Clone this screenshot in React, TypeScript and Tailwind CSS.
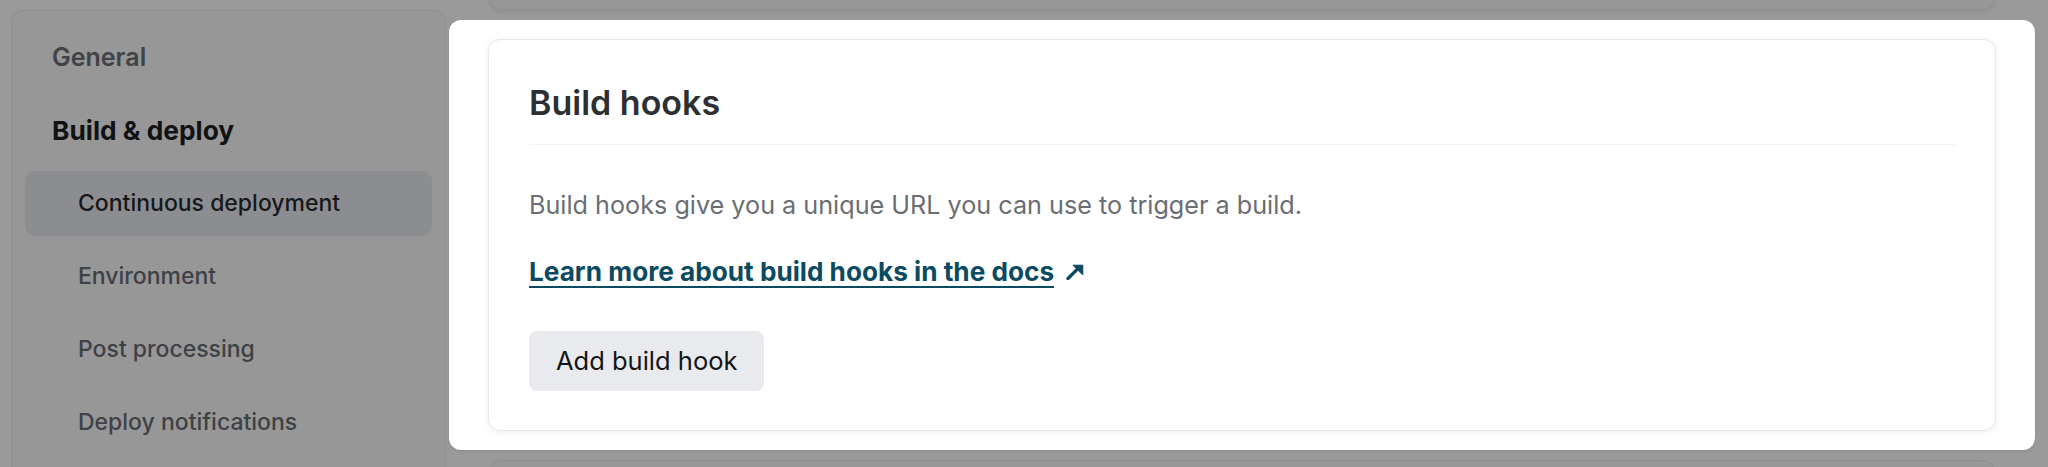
import React from "react";

const navItems = [
  { label: "General", level: 0, active: false },
  { label: "Build & deploy", level: 0, active: false, bold: true },
  { label: "Continuous deployment", level: 1, active: true },
  { label: "Environment", level: 1, active: false },
  { label: "Post processing", level: 1, active: false },
  { label: "Deploy notifications", level: 1, active: false },
];

const Sidebar = () => {
  return (
    <nav className="mt-[10px] h-[520px] w-[435px] shrink-0 rounded-[12px] border border-[#8e8e8e] bg-[#979797] p-[13px] pt-[14px]">
      <ul className="flex flex-col gap-[8px]">
        {navItems.map((item) => (
          <li
            key={item.label}
            className={
              "flex h-[65px] items-center rounded-[10px] " +
              (item.level === 0 ? "pl-[27px] " : "pl-[53px] ") +
              (item.active ? "bg-[#8c8d90] " : "")
            }
          >
            {item.level === 0 ? (
              <span
                className={
                  item.bold
                    ? "text-[26.3px] font-bold text-[#111214]"
                    : "text-[25px] font-semibold text-[#404347]"
                }
              >
                {item.label}
              </span>
            ) : (
              <span
                className={
                  item.active
                    ? "text-[23px] font-medium text-[#17181a]"
                    : "text-[23px] font-medium text-[#3e4145]"
                }
              >
                {item.label}
              </span>
            )}
          </li>
        ))}
      </ul>
    </nav>
  );
};

const ExternalArrow = () => (
  <svg width="18" height="16" viewBox="0 0 18 16" className="shrink-0 text-[#0b4a60]">
    <path d="M2 14.5 13.5 3" stroke="currentColor" strokeWidth="3.2" strokeLinecap="round" />
    <path d="M7 1.2h9.8V11z" fill="currentColor" stroke="currentColor" strokeWidth="1" strokeLinejoin="round" />
  </svg>
);

const BuildHooksCard = () => {
  return (
    <section className="rounded-[12px] border border-[#e6e7ea] bg-white px-[40px] pt-[41px] pb-[39px] shadow-[0_1px_6px_rgba(0,0,0,0.07)]">
      <div className="border-b border-[#f1f2f3] pb-[19px]">
        <h2 className="text-[34px] leading-[44px] font-semibold text-[#2c2f34]">
          Build hooks
        </h2>
      </div>
      <p className="mt-[44px] text-[25.2px] leading-[32px] text-[#6a6e73]">
        Build hooks give you a unique URL you can use to trigger a build.
      </p>
      <div className="mt-[35px] flex items-center gap-[12px]">
        <a
          href="#"
          className="text-[26.2px] leading-[32px] font-bold text-[#0b4a60] underline decoration-2 underline-offset-[5px]"
        >
          Learn more about build hooks in the docs
        </a>
        <ExternalArrow />
      </div>
      <button className="mt-[43px] h-[60px] rounded-[8px] bg-[#e9eaed] px-[27px] text-[25.5px] font-normal text-[#141517]">
        Add build hook
      </button>
    </section>
  );
};

export default function App() {
  return (
    <div
      className="flex h-[467px] w-[2048px] gap-[3px] overflow-hidden bg-[#9a9a9a] pl-[11px]"
      style={{ fontFamily: "Inter, 'Noto Sans', sans-serif" }}
    >
      <Sidebar />
      <main className="flex w-[1586px] flex-col">
        <div className="mx-[40px] mt-[-30px] h-[40px] shrink-0 rounded-[12px] border border-[#8f8f8f] bg-[#979797] shadow-[0_2px_4px_rgba(0,0,0,0.08)]" />
        <div className="mt-[10px] shrink-0 rounded-[12px] bg-white px-[39px] py-[19px] shadow-[0_1px_3px_rgba(0,0,0,0.1)]">
          <BuildHooksCard />
        </div>
        <div className="mx-[40px] mt-[10px] h-[60px] shrink-0 rounded-[12px] border border-[#8f8f8f] bg-[#979797]" />
      </main>
    </div>
  );
}
